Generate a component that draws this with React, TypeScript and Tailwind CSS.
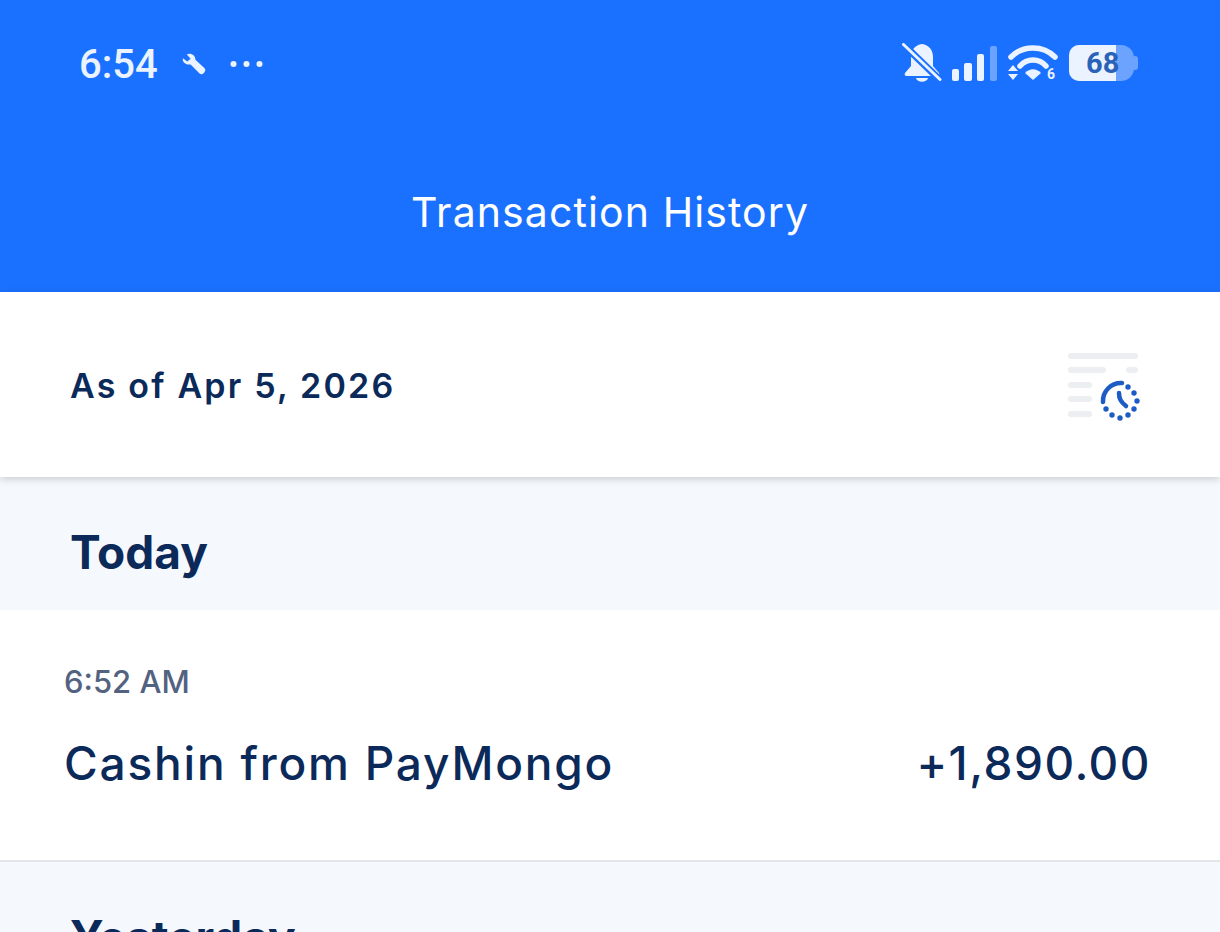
export default function App() {
  return (
    <div className="flex h-[932px] w-[1220px] flex-col overflow-hidden bg-[#f5f8fd] font-['Inter',sans-serif] text-[#0b2a5a]">
      <header className="flex h-[292px] shrink-0 flex-col bg-[#1b71ff] text-white">
        <div className="flex h-[186px] shrink-0 items-start justify-between pl-[79px] pr-[82px] pt-[41px]">
          <div className="flex items-center">
            <span className="font-['Roboto',sans-serif] text-[40px] font-medium leading-[48px] text-[#eaf3ff]">6:54</span>
            <svg className="ml-[23px] mt-[-2px]" width="25" height="25" viewBox="0 0 26 26" fill="#eaf3ff">
              <path d="M2 6.500 L6.500 10 L10 7 L6 2.500 C10 0.500 15 3 15 8 L24.500 17 C26 19 25 20.500 23.500 22 C22.500 23.200 20.500 23.500 19.300 22.300 L10 13 C5.500 13.500 1 11 2 6.500 Z" />
            </svg>
            <svg className="ml-[24px] mt-[-2px]" width="33" height="8" viewBox="0 0 33 8" fill="#eaf3ff">
              <circle cx="3.500" cy="4" r="3" />
              <circle cx="16.500" cy="4" r="3" />
              <circle cx="29.500" cy="4" r="3" />
            </svg>
          </div>
          <div className="flex items-center pt-[2px]">
            <svg width="40" height="40" viewBox="0 0 40 40" fill="#eaf3ff">
              <path d="M20 1 C27 2 31 7 31 14 L31 23 L37 30 C38 32 37 33 35 33 L5 33 C3 33 2 32 3 30 L9 23 L9 14 C9 7 13 2 20 1 Z" />
              <path d="M14 35 L26 35 C25 40 15 40 14 35 Z" />
              <path d="M1 1 L38 37" stroke="#1b71ff" strokeWidth="7" />
              <path d="M1.500 1.500 L38 36.500" stroke="#eaf3ff" strokeWidth="3" strokeLinecap="round" />
            </svg>
            <svg className="ml-[10px]" width="46" height="36" viewBox="0 0 46 36">
              <rect x="0" y="24" width="7" height="12" rx="2" fill="#eaf3ff" />
              <rect x="12" y="18" width="8" height="18" rx="2" fill="#eaf3ff" />
              <rect x="25" y="9" width="7" height="27" rx="2" fill="#eaf3ff" />
              <rect x="38" y="1" width="7" height="35" rx="2" fill="#6ba3ff" />
            </svg>
            <svg className="ml-[10px]" width="50" height="38" viewBox="0 0 50 38">
              <path d="M3 13 C15 1 35 1 47 13" fill="none" stroke="#eaf3ff" strokeWidth="5.500" strokeLinecap="round" />
              <path d="M12 22 C19 14 31 14 38 22" fill="none" stroke="#eaf3ff" strokeWidth="5.500" strokeLinecap="round" />
              <path d="M17 29 C22 24 28 24 33 29 L25 36 Z" fill="#eaf3ff" />
              <path d="M5 21 L10 27 L0 27 Z M0 30 L10 30 L5 36 Z" fill="#eaf3ff" />
              <text x="39" y="35" fontSize="14" fontWeight="700" fill="#eaf3ff" fontFamily="Roboto, sans-serif">6</text>
            </svg>
            <div className="relative ml-[11px] flex h-[36px] w-[65px] overflow-hidden rounded-l-[10px] rounded-r-[13px] bg-[#6ba3ff]">
              <div className="h-full w-[47px] bg-[#eaf3ff]" />
              <span className="absolute left-[17px] top-0 font-['Roboto',sans-serif] text-[29px] font-bold leading-[36px] text-[#2a62b8]">68</span>
            </div>
            <div className="h-[14px] w-[4px] rounded-r-[3px] bg-[#6ba3ff]" />
          </div>
        </div>
        <div className="text-center text-[41px] leading-[52px] tracking-[1.1px] text-white">Transaction History</div>
      </header>

      <section className="relative z-10 flex h-[185px] shrink-0 items-center justify-between bg-white pl-[70px] pr-[80px] shadow-[0_2px_8px_rgba(0,0,0,0.18)]">
        <div className="pt-[3px] text-[34px] font-semibold leading-[44px] tracking-[2.2px]">As of Apr 5, 2026</div>
        <svg width="72" height="68" viewBox="0 0 72 68" className="mt-[4px]">
          <g fill="#eceef1">
            <rect x="0" y="0" width="70" height="6" rx="3" />
            <rect x="0" y="14" width="38" height="6" rx="3" />
            <rect x="58" y="14" width="12" height="6" rx="3" />
            <rect x="0" y="29" width="24" height="6" rx="3" />
            <rect x="0" y="43" width="24" height="6" rx="3" />
            <rect x="0" y="58" width="24" height="6" rx="3" />
          </g>
          <g fill="none" stroke="#1d5cc4" strokeLinecap="round">
            <path d="M35 49 A18 18 0 0 1 54 30" strokeWidth="4.500" />
            <path d="M51 40 C51 46 53 49 58 53" strokeWidth="4.500" />
          </g>
          <g fill="#1d5cc4">
            <circle cx="60" cy="34" r="2.700" />
            <circle cx="66" cy="40" r="2.700" />
            <circle cx="69" cy="48" r="2.700" />
            <circle cx="66" cy="56" r="2.700" />
            <circle cx="60" cy="62" r="2.700" />
            <circle cx="52" cy="65" r="2.700" />
            <circle cx="44" cy="62" r="2.700" />
            <circle cx="38" cy="56" r="2.700" />
          </g>
        </svg>
      </section>

      <div className="flex h-[133px] shrink-0 items-center bg-[#f5f8fd] pl-[70px] pt-[17px] text-[46px] font-bold leading-[56px]">Today</div>

      <section className="flex h-[252px] shrink-0 flex-col border-b-2 border-[#e3e7ec] bg-white pl-[64px] pr-[69px] pt-[52px]">
        <div className="text-[31px] font-medium leading-[40px] text-[#53627f]">6:52 AM</div>
        <div className="mt-[29px] flex items-center justify-between text-[46px] font-medium leading-[64px]">
          <span className="tracking-[1.8px]">Cashin from PayMongo</span>
          <span className="tracking-[1.5px]">+1,890.00</span>
        </div>
      </section>

      <div className="flex h-[70px] items-start overflow-hidden bg-[#f5f8fd] pl-[70px] pt-[47px] text-[46px] font-bold leading-[56px]">Yesterday</div>
    </div>
  );
}
